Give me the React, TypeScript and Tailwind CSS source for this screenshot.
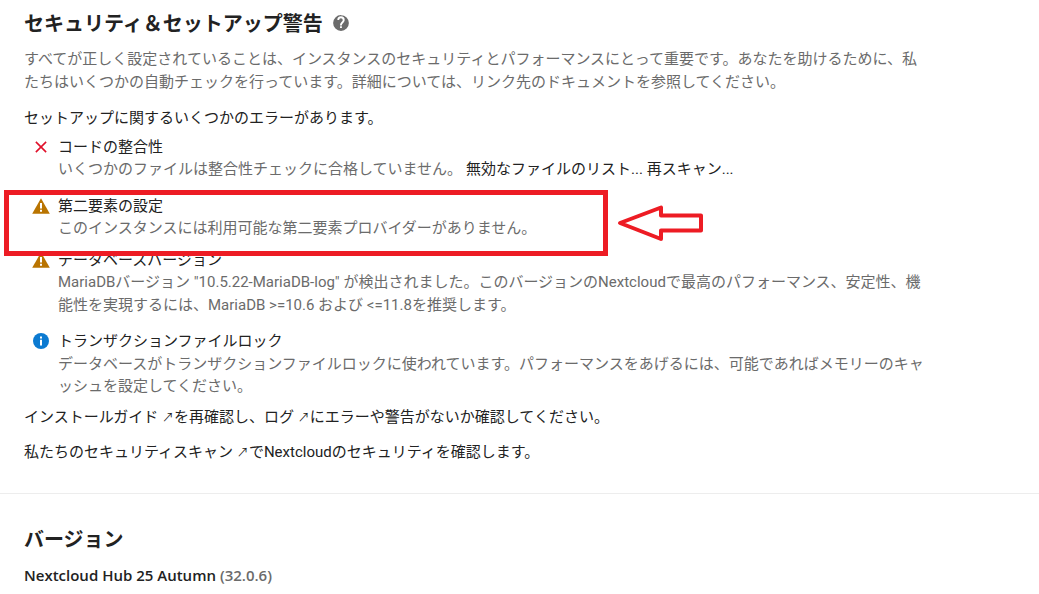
import React from 'react';

function HelpIcon() {
  return (
    <svg viewBox="0 0 24 24" className="ml-[9px] -mt-[2px] h-[18px] w-[18px] shrink-0" fill="#6b6b6b">
      <path d="M12 1.5a10.5 10.5 0 1 0 0 21 10.5 10.5 0 0 0 0-21Zm1.2 17.2h-2.5v-2.5h2.5v2.5Zm2.5-7.6-1.1 1.1c-.9.9-1.4 1.6-1.4 3h-2.5v-.6c0-1.4.5-2.5 1.4-3.4l1.5-1.6c.5-.4.7-1 .7-1.7a2.4 2.4 0 0 0-4.8 0H7.1a4.9 4.9 0 0 1 9.8 0c0 1.1-.5 2-1.2 2.8Z" />
    </svg>
  );
}

function ErrorIcon() {
  return (
    <svg viewBox="0 0 14 14" className="h-[12px] w-[12px]" fill="none" stroke="#e0102a" strokeWidth="1.8">
      <path d="M1 1l12 12M13 1L1 13" />
    </svg>
  );
}

function WarnIcon() {
  return (
    <svg viewBox="0 0 18 16" className="h-[16px] w-[18px]">
      <path d="M9 0.3 17.8 15.7H0.2Z" fill="#b97400" />
      <path d="M8 5h2v5.6H8zM8 11.8h2v2H8z" fill="#fff" />
    </svg>
  );
}

function InfoIcon() {
  return (
    <svg viewBox="0 0 16 16" className="h-[16px] w-[16px]">
      <circle cx="8" cy="8" r="8" fill="#0b7ad1" />
      <path d="M7 3.4h2v2H7zM7 6.8h2v5.8H7z" fill="#fff" />
    </svg>
  );
}

function Issue({ icon, title, className = '', children }: { icon: React.ReactNode; title: string; className?: string; children: React.ReactNode }) {
  return (
    <li className={`flex ${className}`}>
      <div className="flex h-[22px] w-[34px] shrink-0 items-center justify-center">{icon}</div>
      <div className="min-w-0">
        <div className="text-[#222222]">{title}</div>
        <div className="text-[#6b6b6b]">{children}</div>
      </div>
    </li>
  );
}

function Ext({ children }: { children: React.ReactNode }) {
  return (
    <a className="text-[#222222]">
      {children} <span className="text-[12px]">↗</span>
    </a>
  );
}

export default function App() {
  return (
    <div className="relative min-h-[594px] overflow-hidden bg-white font-[family-name:Roboto,'Noto_Sans_CJK_JP',sans-serif] text-[15px] leading-[22.5px] text-[#222222]">
      <section className="pl-[24px] pr-[115px] pt-[11px]">
        <h2 className="flex items-center text-[20px] font-bold leading-[26px] text-[#222222]">
          セキュリティ＆セットアップ警告
          <HelpIcon />
        </h2>
        <p className="mt-[11px] w-[900px] text-[#6b6b6b]">
          すべてが正しく設定されていることは、インスタンスのセキュリティとパフォーマンスにとって重要です。あなたを助けるために、私たちはいくつかの自動チェックを行っています。詳細については、リンク先のドキュメントを参照してください。
        </p>
        <p className="mt-[14px]">セットアップに関するいくつかのエラーがあります。</p>
        <ul className="mt-[6px]">
          <Issue icon={<ErrorIcon />} title="コードの整合性">
            いくつかのファイルは整合性チェックに合格していません。
            <span className="ml-[4px] text-[#222222]">無効なファイルのリスト... 再スキャン...</span>
          </Issue>
          <Issue icon={<WarnIcon />} title="第二要素の設定" className="mt-[14px]">
            このインスタンスには利用可能な第二要素プロバイダーがありません。
          </Issue>
          <Issue icon={<WarnIcon />} title="データベースバージョン" className="mt-[9px]">
            <div className="w-[866px]">
              MariaDBバージョン "10.5.22-MariaDB-log" が検出されました。このバージョンのNextcloudで最高のパフォーマンス、安定性、機能性を実現するには、MariaDB &gt;=10.6 および &lt;=11.8を推奨します。
            </div>
          </Issue>
          <Issue icon={<InfoIcon />} title="トランザクションファイルロック" className="mt-[14px]">
            <div className="w-[866px]">
              データベースがトランザクションファイルロックに使われています。パフォーマンスをあげるには、可能であればメモリーのキャッシュを設定してください。
            </div>
          </Issue>
        </ul>
        <p className="mt-[8px]">
          <Ext>インストールガイド</Ext>を再確認し、<Ext>ログ</Ext>にエラーや警告がないか確認してください。
        </p>
        <p className="mt-[12px]">
          私たちの<Ext>セキュリティスキャン</Ext>でNextcloudのセキュリティを確認します。
        </p>
      </section>
      <hr className="mt-[28px] border-t border-[#ededed]" />
      <section className="pl-[24px] pt-[31px]">
        <h2 className="text-[20px] font-bold leading-[30px]">バージョン</h2>
        <p className="mt-[9px] font-[family-name:'Open_Sans',sans-serif] font-semibold">
          Nextcloud Hub 25 Autumn <span className="text-[#6b6b6b]">(32.0.6)</span>
        </p>
      </section>

      {/* red annotation drawn over the screenshot */}
      <div className="absolute left-[4px] top-[190px] h-[66px] w-[604px] border-[5px] border-[#ed1c24]" />
      <svg className="absolute left-[616px] top-[203px]" width="90" height="40" viewBox="0 0 90 40" fill="none">
        <path d="M4 20 45 4.5V12.5H85V27.5H45V36Z" stroke="#ed1c24" strokeWidth="4" strokeLinejoin="round" />
      </svg>
    </div>
  );
}
